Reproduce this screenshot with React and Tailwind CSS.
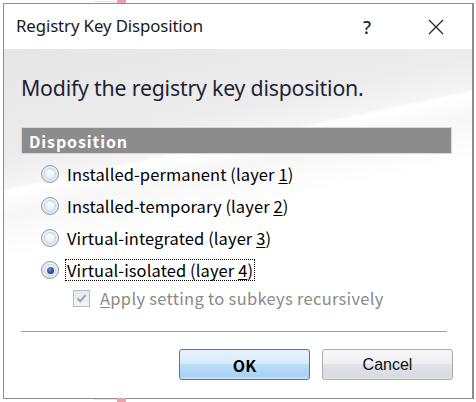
import React from "react";

const labelFont = "font-['Noto_Sans_CJK_JP','Noto_Sans',sans-serif]";

function Radio({ checked }) {
  return (
    <div className="relative w-[18px] h-[18px] rounded-full border border-[#9a9a9a] bg-[radial-gradient(circle_at_50%_45%,#ffffff_0%,#eef2f6_45%,#cdd6df_100%)] flex items-center justify-center shrink-0">
      <div className="w-[12px] h-[12px] rounded-full border border-[#c9d3dd] bg-[radial-gradient(circle_at_50%_40%,#ffffff_0%,#e6edf4_70%)] flex items-center justify-center">
        {checked && (
          <div className="w-[7px] h-[7px] rounded-full bg-[radial-gradient(circle_at_40%_35%,#6b8fd0_0%,#1c3f8c_70%,#122d6b_100%)]" />
        )}
      </div>
    </div>
  );
}

function RadioRow({ text, digit, checked }) {
  return (
    <div className="h-[32px] flex items-center pl-[37px]">
      <Radio checked={checked} />
      <div
        className={
          "ml-[7px] text-[16.5px] leading-[20px] text-black px-[1px] tracking-[0.1px] " +
          labelFont +
          (checked ? " outline outline-1 outline-dotted outline-black" : "")
        }
      >
        {text}
        <span className="underline underline-offset-2">{digit}</span>)
      </div>
    </div>
  );
}

export default function App() {
  return (
    <div className="relative w-[476px] h-[402px] bg-white overflow-hidden">
      <div className="absolute left-[94px] top-[1px] w-[23px] h-[1px] bg-[#e6e6e6]" />
      <div className="absolute left-[117px] top-0 w-[9px] h-[3px] bg-[#f0a0a8]" />
      <div className="absolute left-[117px] top-[398px] w-[9px] h-[4px] bg-[#f0a0a8]" />
      <div className="absolute left-[94px] top-[399px] w-[23px] h-[1px] bg-[#e6e6e6]" />

      <div className="ml-[3px] mt-[3px] w-[471px] h-[396px] border-l border-t border-b border-r-2 border-[#8e8e8e] flex flex-col bg-white">
        {/* title bar */}
        <div className="h-[45px] flex items-center bg-white shrink-0">
          <div className="ml-[12px] text-[16.8px] text-[#1a1a1a] font-['Noto_Sans',sans-serif] leading-none tracking-[-0.1px]">
            Registry Key Disposition
          </div>
          <div className="ml-auto mr-[101px] text-[18px] font-medium text-[#222] font-['Noto_Sans',sans-serif] leading-none">
            ?
          </div>
        </div>
        <svg className="absolute left-[428px] top-[19px]" width="16" height="16" viewBox="0 0 16 16">
          <path d="M1 1 L15 15 M15 1 L1 15" stroke="#222" strokeWidth="1.2" fill="none" />
        </svg>

        {/* body */}
        <div className="flex-1 flex flex-col bg-[linear-gradient(168deg,#e6e6e6_0%,#ececec_24%,#f5f5f5_31%,#ffffff_32%,#f7f7f7_37%,#ffffff_47%,#ffffff_100%)]">
          <div className="h-[78px] flex items-center pl-[17px]">
            <div className="text-[21.3px] text-[#1e2338] font-['Noto_Sans',sans-serif] leading-none tracking-[-0.2px]">
              Modify the registry key disposition.
            </div>
          </div>

          <div className="ml-[17px] w-[431px] h-[27px] bg-[#8c8c8c] border border-[#d8d8d8] flex items-center pl-[7px]">
            <span className={"text-white font-bold text-[16px] leading-none tracking-[0.9px] " + labelFont}>
              Disposition
            </span>
          </div>

          <div className="mt-[4px] flex flex-col">
            <RadioRow text="Installed-permanent (layer " digit="1" />
            <RadioRow text="Installed-temporary (layer " digit="2" />
            <RadioRow text="Virtual-integrated (layer " digit="3" />
            <RadioRow text="Virtual-isolated (layer " digit="4" checked />
          </div>

          <div className="h-[24px] flex items-center pl-[69px]">
            <div className="w-[17px] h-[17px] border border-[#b5bcc6] bg-[linear-gradient(180deg,#e4e9ef,#f2f4f7)] flex items-center justify-center">
              <svg width="13" height="13" viewBox="0 0 13 13">
                <path d="M2.5 6.5 L5.2 9.3 L10.5 3.2" stroke="#9aa3ad" strokeWidth="2" fill="none" />
              </svg>
            </div>
            <div className={"ml-[10px] text-[16.5px] leading-none text-[#8a8a8a] tracking-[0.3px] " + labelFont}>
              <span className="underline underline-offset-2">A</span>pply setting to subkeys recursively
            </div>
          </div>

          <div className="mt-[21px] ml-[17px] w-[426px] h-[1px] bg-[#a0a0a0]" />

          <div className="mt-[17px] flex justify-end gap-[12px] pr-[19px]">
            <div className="w-[131px] h-[31px] rounded-[3px] border border-[#3c7fb1] bg-[linear-gradient(180deg,#e6f2fc_0%,#d7ebfb_48%,#bcdcf6_50%,#a9d2f3_90%,#cfe4f7_100%)] flex items-center justify-center">
              <span className={"font-bold text-[16px] leading-none text-black " + labelFont}>OK</span>
            </div>
            <div className="w-[131px] h-[31px] rounded-[3px] border border-[#acacac] bg-[linear-gradient(180deg,#f7f7f7_0%,#efefef_48%,#e1e3e8_50%,#d9dbe0_95%,#ececec_100%)] flex items-center justify-center">
              <span className="text-[16px] leading-none text-[#111] font-['Liberation_Sans',sans-serif]">Cancel</span>
            </div>
          </div>
        </div>
      </div>
    </div>
  );
}
